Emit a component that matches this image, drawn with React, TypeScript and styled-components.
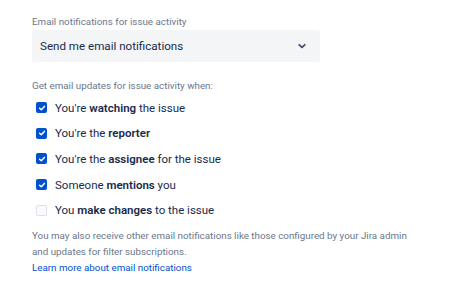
import React from "react";
import styled, { createGlobalStyle } from "styled-components";

const GlobalStyle = createGlobalStyle`
    body {
        margin: 0;
        background: #fff;
        font-family: Roboto, "Noto Sans", sans-serif;
        color: #172B4D;
    }
`;

const options = [
    { checked: true, before: "You're ", bold: "watching", after: " the issue" },
    { checked: true, before: "You're the ", bold: "reporter", after: "" },
    { checked: true, before: "You're the ", bold: "assignee", after: " for the issue" },
    { checked: true, before: "Someone ", bold: "mentions", after: " you" },
    { checked: false, before: "You ", bold: "make changes", after: " to the issue" },
];

const App = () => {
    return (
        <>
            <GlobalStyle />
            <Container>
                <Label>Email notifications for issue activity</Label>
                <Select>
                    <span>Send me email notifications</span>
                    <svg width="12" height="12" viewBox="0 0 12 12">
                        <path d="M3.2 4.8 L6 7.4 L8.8 4.8" fill="none" stroke="#42526E" strokeWidth="1.8" strokeLinecap="round" strokeLinejoin="round" />
                    </svg>
                </Select>
                <SubLabel>Get email updates for issue activity when:</SubLabel>
                <List>
                    {options.map((o, i) => (
                        <Row key={i}>
                            <Box checked={o.checked}>
                                {o.checked && (
                                    <svg width="8" height="8" viewBox="0 0 8 8">
                                        <path d="M1.6 4.2 L3.3 5.7 L6.4 2.4" fill="none" stroke="#fff" strokeWidth="1.5" strokeLinecap="round" strokeLinejoin="round" />
                                    </svg>
                                )}
                            </Box>
                            <span>{o.before}<b>{o.bold}</b>{o.after}</span>
                        </Row>
                    ))}
                </List>
                <Note>
                    You may also receive other email notifications like those configured by your Jira admin and updates for filter subscriptions.
                </Note>
                <Link href="#">Learn more about email notifications</Link>
            </Container>
        </>
    );
};

const Container = styled.div`
    padding: 14px 32px 0 32px;
    width: 410px;
    display: flex;
    flex-direction: column;
`;

const Label = styled.div`
    font-size: 9.8px;
    line-height: 16px;
    color: #6B778C;
`;

const Select = styled.div`
    width: 288px;
    height: 32px;
    box-sizing: border-box;
    padding: 0 12px 0 8px;
    background: #F4F5F7;
    border-radius: 3px;
    display: flex;
    align-items: center;
    justify-content: space-between;
    font-size: 11.6px;
    color: #172B4D;
`;

const SubLabel = styled.div`
    margin-top: 16px;
    font-size: 9.8px;
    line-height: 16px;
    color: #6B778C;
`;

const List = styled.div`
    display: flex;
    flex-direction: column;
    margin-top: 1px;
`;

const Row = styled.div`
    height: 25.6px;
    display: flex;
    align-items: center;
    font-size: 11.5px;
    color: #172B4D;
    b {
        font-weight: 600;
    }
`;

const Box = styled.span<{ checked: boolean }>`
    width: 11px;
    height: 11px;
    box-sizing: border-box;
    margin: 0 8px 0 4px;
    border-radius: 2px;
    display: flex;
    align-items: center;
    justify-content: center;
    background: ${p => (p.checked ? "#0052CC" : "#FAFBFC")};
    border: ${p => (p.checked ? "none" : "1.5px solid #DFE1E6")};
`;

const Note = styled.div`
    margin-top: 5px;
    font-size: 9.8px;
    line-height: 16px;
    color: #6B778C;
    width: 390px;
`;

const Link = styled.a`
    font-size: 9.8px;
    line-height: 16px;
    color: #0052CC;
    text-decoration: none;
`;

export default App;
